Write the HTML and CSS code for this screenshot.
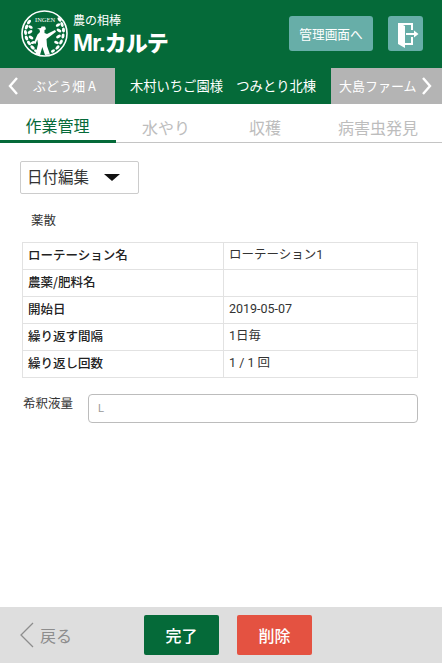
FILE: index.html
```html
<!DOCTYPE html>
<html lang="ja">
<head>
<meta charset="utf-8">
<title>Mr.カルテ</title>
<link rel="stylesheet" href="styles.css">
</head>
<body>
<div class="page">
  <header class="header">
    <div class="logo">
      <svg class="emblem" width="50" height="50" viewBox="0 0 50 50">
        <circle cx="24.5" cy="24.5" r="22.5" fill="#056a39" stroke="#fff" stroke-width="1.6"/>
        <g fill="#fff">
          <ellipse cx="9" cy="13" rx="2.6" ry="1.5" transform="rotate(-50 9 13)"/>
          <ellipse cx="6.5" cy="18" rx="2.6" ry="1.5" transform="rotate(-70 6.5 18)"/>
          <ellipse cx="10.5" cy="18" rx="2.4" ry="1.4" transform="rotate(30 10.5 18)"/>
          <ellipse cx="5.5" cy="23.5" rx="2.6" ry="1.5" transform="rotate(80 5.5 23.5)"/>
          <ellipse cx="10" cy="23" rx="2.6" ry="1.5" transform="rotate(-30 10 23)"/>
          <ellipse cx="6.5" cy="29" rx="2.6" ry="1.5" transform="rotate(65 6.5 29)"/>
          <ellipse cx="11" cy="28.5" rx="2.6" ry="1.5" transform="rotate(30 11 28.5)"/>
          <ellipse cx="9" cy="34" rx="2.6" ry="1.5" transform="rotate(50 9 34)"/>
          <ellipse cx="13" cy="33.5" rx="2.2" ry="1.4" transform="rotate(-20 13 33.5)"/>
          <ellipse cx="12.5" cy="38.5" rx="2.6" ry="1.5" transform="rotate(40 12.5 38.5)"/>
          <ellipse cx="16" cy="42" rx="2.2" ry="1.3" transform="rotate(30 16 42)"/>
          <ellipse cx="39.5" cy="10.5" rx="2.6" ry="1.5" transform="rotate(50 39.5 10.5)"/>
          <ellipse cx="42" cy="15.5" rx="2.6" ry="1.5" transform="rotate(70 42 15.5)"/>
          <ellipse cx="38" cy="16" rx="2.4" ry="1.4" transform="rotate(-30 38 16)"/>
          <ellipse cx="43.5" cy="21" rx="2.6" ry="1.5" transform="rotate(85 43.5 21)"/>
          <ellipse cx="39" cy="21.5" rx="2.6" ry="1.5" transform="rotate(30 39 21.5)"/>
          <ellipse cx="43" cy="27" rx="2.6" ry="1.5" transform="rotate(100 43 27)"/>
          <ellipse cx="38.5" cy="27.5" rx="2.6" ry="1.5" transform="rotate(-30 38.5 27.5)"/>
          <ellipse cx="41" cy="33" rx="2.6" ry="1.5" transform="rotate(120 41 33)"/>
          <ellipse cx="36.5" cy="33.5" rx="2.4" ry="1.4" transform="rotate(20 36.5 33.5)"/>
          <ellipse cx="37.5" cy="38.5" rx="2.6" ry="1.5" transform="rotate(135 37.5 38.5)"/>
          <ellipse cx="33" cy="42" rx="2.2" ry="1.3" transform="rotate(150 33 42)"/>
          <path d="M17 19.5 21 19 21.5 17.5 25 17.5 26 20.2 24.5 21 24.5 24 27 25 35 21 36 22.8 28.5 28.5 26.5 30 27 37 30 45.5 25 46 22.3 38 20 46 15.5 45.5 18 35 17.3 30.5 15.5 35 13.8 34 17.5 25.5 20 23 19.5 20.5Z"/>
        </g>
      </svg>
      <span class="emblem-text">INGEN</span>
      <div class="brand">
        <span class="brand-sub">農の相棒</span>
        <span class="brand-main"><span class="brand-mr">Mr.</span>カルテ</span>
      </div>
    </div>
    <div class="header-actions">
      <a class="admin-btn">管理画面へ</a>
      <a class="exit-btn" aria-label="ログアウト">
        <svg width="35" height="35" viewBox="0 0 35 35">
          <path d="M10 7H25V14H23V9H15L17 10V27H23V21H25V29H17V32L10 28Z" fill="#fff"/>
          <path d="M18 17H26V14.5L30.5 18 26 21.5V19H18Z" fill="#fff"/>
        </svg>
      </a>
    </div>
  </header>

  <nav class="farm-nav">
    <a class="farm-side farm-prev">
      <svg width="12" height="20" viewBox="0 0 12 20"><path d="M10 2 3 10l7 8" fill="none" stroke="#fff" stroke-width="2.4"/></svg>
      <span>ぶどう畑 A</span>
    </a>
    <div class="farm-current">木村いちご園様　つみとり北棟</div>
    <a class="farm-side farm-next">
      <span>大島ファーム</span>
      <svg width="12" height="20" viewBox="0 0 12 20"><path d="M2 2l7 8-7 8" fill="none" stroke="#fff" stroke-width="2.4"/></svg>
    </a>
  </nav>

  <div class="tabs">
    <a class="tab tab-active">作業管理</a>
    <a class="tab">水やり</a>
    <a class="tab">収穫</a>
    <a class="tab">病害虫発見</a>
  </div>

  <main class="content">
    <button class="date-select">日付編集<span class="caret"></span></button>
    <p class="section-title">薬散</p>
    <table class="info">
      <tr><th>ローテーション名</th><td>ローテーション1</td></tr>
      <tr><th>農薬/肥料名</th><td></td></tr>
      <tr><th>開始日</th><td>2019-05-07</td></tr>
      <tr><th>繰り返す間隔</th><td>1日毎</td></tr>
      <tr><th>繰り返し回数</th><td>1 / 1 回</td></tr>
    </table>
    <div class="dilution">
      <label class="dilution-label" for="amount">希釈液量</label>
      <input class="dilution-input" id="amount" type="text" placeholder="L">
    </div>
  </main>

  <footer class="footer">
    <a class="back">
      <svg width="16" height="28" viewBox="0 0 16 28"><path d="M14 2 2 14l12 12" fill="none" stroke="#8d8d8d" stroke-width="1.3"/></svg>
      <span>戻る</span>
    </a>
    <button class="action action-done">完了</button>
    <button class="action action-delete">削除</button>
  </footer>
</div>
</body>
</html>
```

FILE: styles.css
```css
* { box-sizing: border-box; }
html, body { margin: 0; padding: 0; height: 100%; }
body {
  font-family: "Noto Sans CJK JP", "Noto Sans", "Liberation Sans", sans-serif;
  background: #fff;
  color: #333;
}
.page { display: flex; flex-direction: column; height: 663px; overflow: hidden; }

.header {
  height: 68px;
  background: #056a39;
  display: flex;
  align-items: center;
  justify-content: space-between;
  padding: 0 19px 0 20px;
  flex: none;
}
.logo { display: flex; align-items: center; position: relative; }
.emblem { display: block; }
.emblem-text {
  position: absolute;
  left: 15px;
  top: 7px;
  font-family: "Liberation Serif", serif;
  font-size: 6.5px;
  line-height: 8px;
  color: #fff;
}
.brand { display: flex; flex-direction: column; margin-left: 3px; color: #fff; }
.brand-sub { font-size: 12px; line-height: 14px; margin-bottom: 1px; }
.brand-main { font-size: 22px; line-height: 26px; font-weight: 900; letter-spacing: -1px; white-space: nowrap; }
.brand-mr { font-family: "Liberation Sans", sans-serif; font-weight: 700; font-size: 24px; }
.header-actions { display: flex; align-items: center; gap: 15px; margin-top: -2px; }
.admin-btn {
  width: 84px;
  height: 35px;
  border-radius: 3px;
  background: #67aea8;
  color: #fff;
  font-size: 12.7px;
  display: flex;
  align-items: center;
  justify-content: center;
}
.exit-btn {
  width: 35px;
  height: 35px;
  border-radius: 3px;
  background: #67aea8;
  display: flex;
}

.farm-nav { height: 36px; display: flex; flex: none; background: #056a39; }
.farm-side {
  background: #b4b4b4;
  color: #fff;
  font-size: 13px;
  display: flex;
  align-items: center;
  white-space: nowrap;
}
.farm-side span { padding-bottom: 2px; }
.farm-prev { width: 115px; padding-left: 7px; gap: 14px; }
.farm-next { width: 111px; padding-left: 8px; gap: 4px; }
.farm-current {
  flex: 1;
  color: #fff;
  font-size: 13.3px;
  display: flex;
  align-items: center;
  justify-content: center;
  white-space: nowrap;
  padding-bottom: 2px;
}

.tabs { display: grid; grid-template-columns: 116px 100px 98px 1fr; height: 39px; flex: none; border-bottom: 1px solid #c4c4c4; }
.tab {
  font-size: 16px;
  color: #bdbdbd;
  display: flex;
  align-items: center;
  justify-content: center;
  margin-bottom: -1px;
  padding-top: 6px;
}
.tab-active { color: #056a39; border-bottom: 3px solid #056a39; padding-top: 5px; padding-right: 1px; }

.content { flex: 1; padding: 18px 24px 0 20px; }
.date-select {
  display: flex;
  align-items: center;
  width: 119px;
  height: 33px;
  padding: 0 0 3px 6px;
  background: #fff;
  border: 1px solid #ccc;
  border-radius: 2px;
  font: inherit;
  font-size: 15.5px;
  color: #333;
}
.caret {
  margin: 3px 0 0 15px;
  border-left: 8px solid transparent;
  border-right: 8px solid transparent;
  border-top: 7px solid #111;
}
.section-title { margin: 17px 0 0 11px; height: 31px; font-size: 12.5px; line-height: 18px; color: #333; }
.info {
  width: 396px;
  margin-left: 2px;
  border-collapse: collapse;
  table-layout: fixed;
  font-size: 12.5px;
}
.info th, .info td {
  height: 27px;
  padding: 0 5px 2px;
  border: 1px solid #e2e2e2;
  text-align: left;
  color: #333;
  line-height: 16px;
}
.info th { width: 201px; font-weight: 500; color: #222; }
.info td { font-weight: 400; font-family: Roboto, "Noto Sans CJK JP", sans-serif; }

.dilution { display: flex; align-items: flex-start; margin-top: 16px; gap: 7px; margin-left: 3px; }
.dilution-label { font-size: 12.5px; line-height: 18px; width: 58px; color: #333; }
.dilution-input {
  width: 330px;
  height: 29px;
  padding: 0 9px 2px;
  border: 1px solid #bcbcbc;
  border-radius: 4px;
  font-size: 11px;
  font-family: "Liberation Sans", sans-serif;
  background: #fff;
}
.dilution-input::placeholder { color: #999; }

.footer {
  height: 56px;
  flex: none;
  background: #dedede;
  display: flex;
  align-items: center;
  padding: 0 0 0 19px;
}
.back {
  display: flex;
  align-items: center;
  gap: 5px;
  width: 125px;
  color: #8d8d8d;
  font-size: 16px;
}
.action {
  width: 75px;
  height: 40px;
  border: 0;
  border-radius: 2px;
  color: #fff;
  font: inherit;
  font-size: 16px;
  font-weight: 500;
}
.action-done { background: #056a39; }
.action-delete { background: #e45241; margin-left: 18px; }
```
